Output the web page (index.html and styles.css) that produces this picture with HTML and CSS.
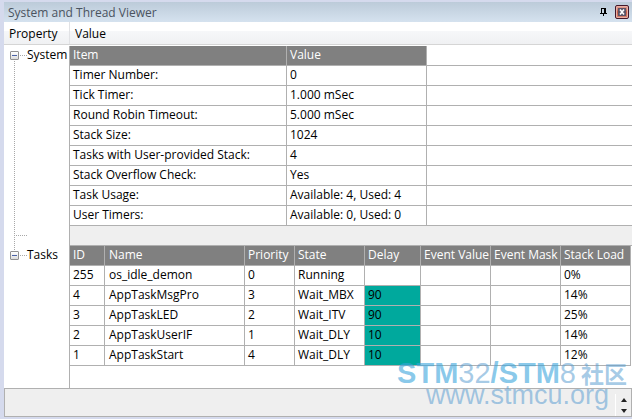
FILE: index.html
```html
<!DOCTYPE html>
<html lang="en">
<head>
  <meta charset="UTF-8" />
  <meta name="viewport" content="width=device-width, initial-scale=1.0" />
  <title>System and Thread Viewer</title>
  <link rel="stylesheet" href="styles.css">
</head>
<body>
  <div class="window">
    <header class="titlebar">
      <h1>System and Thread Viewer</h1>
      <button class="pin" type="button" aria-label="Auto hide">
        <svg width="7" height="8" viewBox="0 0 7 8" shape-rendering="crispEdges">
          <path d="M1 0h5v5h1v1H4v2H3V6H0V5h1zM2 1v4h2V1z" fill="#000" fill-rule="evenodd" />
        </svg>
      </button>
      <button class="close" type="button" aria-label="Close">
        <svg width="8" height="8" viewBox="0 0 8 8">
          <path d="M0 0h8v8H0z" fill="#5c5366" />
          <path d="M2 1.500l4 5M6 1.500l-4 5" stroke="#fff" stroke-width="1.600" />
        </svg>
      </button>
    </header>

    <div class="columns">
      <div class="col-property">Property</div>
      <div class="col-value">Value</div>
    </div>

    <main class="content">
      <section class="group">
        <div class="node">
          <button class="toggle" type="button" aria-label="Collapse System"></button>
          <span class="branch"></span>
          <span>System</span>
          <span class="trunk"></span>
        </div>
        <table class="grid system">
          <colgroup><col class="w-item"><col class="w-setting"><col></colgroup>
          <thead>
            <tr><th>Item</th><th>Value</th><td></td></tr>
          </thead>
          <tbody>
            <tr><td>Timer Number:</td><td>0</td><td></td></tr>
            <tr><td>Tick Timer:</td><td>1.000 mSec</td><td></td></tr>
            <tr><td>Round Robin Timeout:</td><td>5.000 mSec</td><td></td></tr>
            <tr><td>Stack Size:</td><td>1024</td><td></td></tr>
            <tr><td>Tasks with User-provided Stack:</td><td>4</td><td></td></tr>
            <tr><td>Stack Overflow Check:</td><td>Yes</td><td></td></tr>
            <tr><td>Task Usage:</td><td>Available: 4, Used: 4</td><td></td></tr>
            <tr><td>User Timers:</td><td>Available: 0, Used: 0</td><td></td></tr>
            <tr class="spacer"><td colspan="3"></td></tr>
          </tbody>
        </table>
      </section>

      <section class="group">
        <div class="node">
          <button class="toggle" type="button" aria-label="Collapse Tasks"></button>
          <span class="branch"></span>
          <span>Tasks</span>
        </div>
        <table class="grid tasks">
          <colgroup>
            <col class="w-id"><col class="w-name"><col class="w-priority"><col class="w-state">
            <col class="w-delay"><col class="w-event"><col class="w-event"><col>
          </colgroup>
          <thead>
            <tr><th>ID</th><th>Name</th><th>Priority</th><th>State</th><th>Delay</th><th>Event Value</th><th>Event Mask</th><th>Stack Load</th></tr>
          </thead>
          <tbody>
            <tr><td>255</td><td>os_idle_demon</td><td>0</td><td>Running</td><td></td><td></td><td></td><td>0%</td></tr>
            <tr><td>4</td><td>AppTaskMsgPro</td><td>3</td><td>Wait_MBX</td><td class="wait">90</td><td></td><td></td><td>14%</td></tr>
            <tr><td>3</td><td>AppTaskLED</td><td>2</td><td>Wait_ITV</td><td class="wait">90</td><td></td><td></td><td>25%</td></tr>
            <tr><td>2</td><td>AppTaskUserIF</td><td>1</td><td>Wait_DLY</td><td class="wait">10</td><td></td><td></td><td>14%</td></tr>
            <tr><td>1</td><td>AppTaskStart</td><td>4</td><td>Wait_DLY</td><td class="wait">10</td><td></td><td></td><td>12%</td></tr>
          </tbody>
        </table>
      </section>
      <div class="rest"></div>
    </main>

    <footer class="statusbar">
      <div class="spinner">
        <button type="button" aria-label="Up"><svg width="6" height="4" viewBox="0 0 6 4"><path d="M3 0l3 4H0z" fill="#222" /></svg></button>
        <button type="button" aria-label="Down"><svg width="6" height="4" viewBox="0 0 6 4"><path d="M3 4l3-4H0z" fill="#222" /></svg></button>
      </div>
    </footer>

    <div class="watermark">
      <div class="brand"><b>STM</b>32<b>/STM</b>8<span class="community">社区</span></div>
      <div class="site">www.stmcu.org</div>
    </div>
  </div>
</body>
</html>
```
FILE: styles.css
```css
* {
  box-sizing: border-box;
  margin: 0;
  padding: 0;
}

body {
  background: #d5daed;
  color: #000;
  font-family: "Open Sans", "Noto Sans", sans-serif;
  font-size: 12px;
  line-height: 17px;
}

button {
  border: none;
  background: none;
}

.window {
  position: relative;
  display: flex;
  flex-direction: column;
  min-height: 100vh;
  padding: 2px 0 2px 4px;
}

.titlebar {
  display: flex;
  align-items: center;
  height: 20px;
  padding: 0 3px 0 4px;
  background: linear-gradient(#bccbd9, #d5e2ef);
}

.titlebar h1 {
  flex: 1;
  color: #4a5360;
  font-size: 12px;
  font-weight: 400;
}

.titlebar svg {
  display: block;
}

.pin {
  margin-right: 8px;
}

.close {
  display: flex;
  align-items: center;
  justify-content: center;
  width: 14px;
  height: 14px;
  border: 1px solid #45182a;
  border-radius: 2px;
  background: linear-gradient(#e9a99d, #c25a46 50%, #d98573);
  box-shadow: inset 0 0 0 1px #e8b0a6;
}

.columns {
  display: flex;
  height: 23px;
  border-bottom: 1px solid #d5d5d5;
  background: linear-gradient(#fff 9px, #f6f7f9 9px, #f0f1f3);
  line-height: 24px;
}

.col-property {
  width: 66px;
  padding-left: 5px;
  border-right: 1px solid #e1e2e5;
}

.col-value {
  padding-left: 5px;
}

.content {
  display: flex;
  flex: 1;
  flex-direction: column;
  padding-top: 1px;
  background: #fff;
}

.group {
  display: flex;
}

.node {
  position: relative;
  display: flex;
  flex: 0 0 65px;
  align-items: flex-start;
  padding-left: 6px;
}

.toggle {
  flex: none;
  width: 9px;
  height: 9px;
  margin-top: 5px;
  border: 1px solid #919191;
  border-radius: 1px;
  background: linear-gradient(#4b63a7, #4b63a7) center / 5px 1px no-repeat, linear-gradient(#fff, #ddd);
}

.branch {
  width: 7px;
  height: 1px;
  margin: 9px 0 0 1px;
  background: repeating-linear-gradient(90deg, #a8a8a8 0 1px, transparent 1px 2px);
}

/* dotted line running down to the next group, with a stub at the last row */
.trunk {
  position: absolute;
  top: 15px;
  bottom: -4px;
  left: 10px;
  width: 13px;
  background:
    repeating-linear-gradient(#a8a8a8 0 1px, transparent 1px 2px) left top / 1px 100% no-repeat,
    repeating-linear-gradient(90deg, #a8a8a8 0 1px, transparent 1px 2px) left bottom 14px / 13px 1px no-repeat;
}

.grid {
  flex: 1;
  width: 100%;
  border-left: 1px solid #b0b0b0;
  border-spacing: 0;
  table-layout: fixed;
}

.grid th,
.grid td {
  height: 20px;
  padding-left: 3px;
  border-right: 1px solid #b0b0b0;
  border-bottom: 1px solid #b0b0b0;
  text-align: left;
  vertical-align: top;
  white-space: nowrap;
}

.grid th {
  background: #808080;
  color: #fff;
  font-weight: 400;
}

.system td:last-child {
  border-right: none;
}

.spacer td {
  background: #efefef;
}

.tasks {
  margin-right: 1px;
}

.tasks td:nth-child(2),
.tasks th:nth-child(2) {
  padding-left: 4px;
}

.tasks .wait {
  background: #00a99d;
}

.w-item { width: 217px; }
.w-setting { width: 140px; }
.w-id { width: 35px; }
.w-name { width: 140px; }
.w-priority { width: 50px; }
.w-state { width: 70px; }
.w-delay { width: 56px; }
.w-event { width: 70px; }

.rest {
  flex: 1;
  margin-left: 65px;
  border-left: 1px solid #b0b0b0;
}

.statusbar {
  display: flex;
  justify-content: flex-end;
  height: 29px;
  border: 1px solid #b0b0b0;
  background: #efefef;
}

.spinner {
  display: flex;
  flex-direction: column;
  justify-content: flex-end;
  gap: 7px;
  width: 16px;
  margin-top: 5px;
  padding: 0 0 3px 5px;
  border-left: 1px solid #fff;
}

.spinner svg,
.spinner button {
  display: block;
  width: 6px;
  height: 4px;
}

.watermark {
  position: absolute;
  right: 5px;
  bottom: 14px;
  color: rgba(91, 158, 209, 0.55);
  font-family: "Liberation Sans", "Noto Sans CJK SC", sans-serif;
  pointer-events: none;
}

.brand {
  font-size: 29px;
  line-height: 20px;
}

.brand b {
  color: rgba(58, 165, 220, 0.6);
}

.community {
  margin-left: 5px;
  font-size: 23px;
  font-weight: 700;
}

.site {
  margin-right: 18px;
  font-size: 27px;
  line-height: 20px;
  text-align: right;
}
```
